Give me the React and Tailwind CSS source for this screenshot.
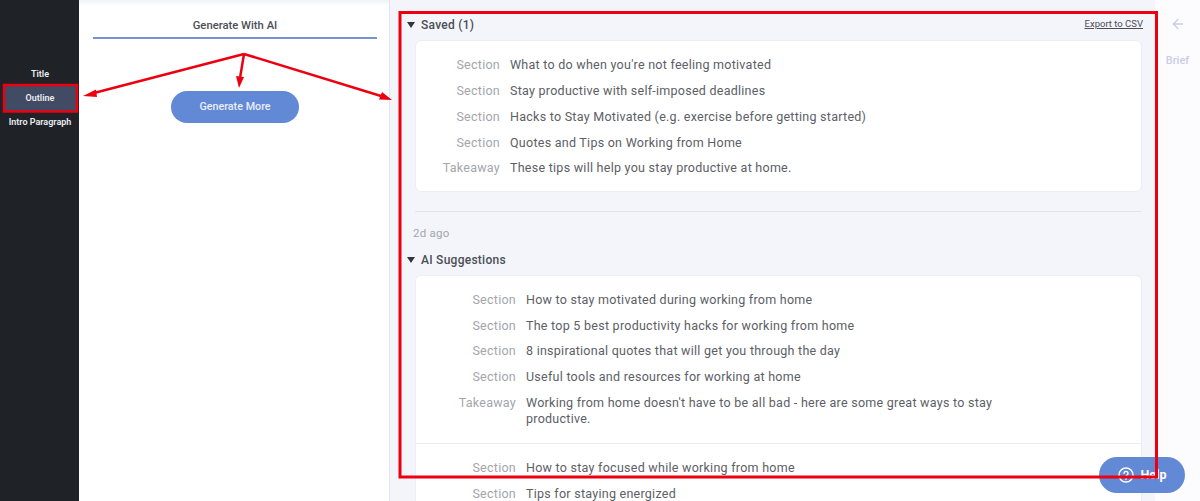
import { ArrowLeft } from "lucide-react";

const saved = [
  ["Section", "What to do when you're not feeling motivated", "h-[26px]"],
  ["Section", "Stay productive with self-imposed deadlines", "h-[26px]"],
  ["Section", "Hacks to Stay Motivated (e.g. exercise before getting started)", "h-[26px]"],
  ["Section", "Quotes and Tips on Working from Home", "h-[26px]"],
  ["Takeaway", "These tips will help you stay productive at home.", "h-[24px]"],
];

const suggestions = [
  ["Section", "How to stay motivated during working from home", "h-[26px]"],
  ["Section", "The top 5 best productivity hacks for working from home", "h-[26px]"],
  ["Section", "8 inspirational quotes that will get you through the day", "h-[25px]"],
  ["Section", "Useful tools and resources for working at home", "h-[26px]"],
];

const more = [
  ["Section", "How to stay focused while working from home"],
  ["Section", "Tips for staying energized"],
];

const Row = ({ label, text, labelWidth, rowClass }) => (
  <div className={`flex items-center gap-[10px] ${rowClass}`}>
    <span className={`shrink-0 text-right text-[#a3a6ab] ${labelWidth}`}>{label}</span>
    <span className="text-[#5c6066]">{text}</span>
  </div>
);

const Heading = ({ children }) => (
  <div className="flex items-center gap-[6px] text-[12px] font-medium text-[#4a4e55]">
    <span className="h-0 w-0 border-x-[4px] border-t-[6px] border-x-transparent border-t-[#33363b]" />
    <span>{children}</span>
  </div>
);

const Annotations = () => (
  <svg className="pointer-events-none absolute inset-0" width="1200" height="501" fill="none">
    <rect x="400" y="12.5" width="756.5" height="464.5" stroke="#ec0010" strokeWidth="3" />
    <rect x="4" y="85" width="73" height="26.5" stroke="#ec0010" strokeWidth="2.5" />
    <g stroke="#ec0010" strokeWidth="2.5">
      <path d="M244 54 L92 93.5" />
      <path d="M244 54 L240 78" />
      <path d="M244 54 L381 96" />
    </g>
    <g fill="#ec0010">
      <path d="M83 96 L96 89.5 L97 97 Z" />
      <path d="M239 88 L236 76 L244 77 Z" />
      <path d="M392 100 L379 99.5 L382 92 Z" />
    </g>
  </svg>
);

export default function App() {
  return (
    <div className="relative flex h-[501px] w-[1200px] overflow-hidden bg-white font-['Roboto',sans-serif]">
      {/* sidebar */}
      <aside className="flex w-[79px] shrink-0 flex-col items-stretch bg-[#1f2227] pl-[3px] pr-[2px] pt-[63px] text-center text-[9px] font-semibold text-[#eceef2]">
        <div className="flex h-[22px] items-center justify-center pt-[2px]">Title</div>
        <div className="flex h-[26px] items-center justify-center bg-[#414b63] pt-[2px]">Outline</div>
        <div className="flex h-[22px] items-center justify-center whitespace-nowrap pt-[2px]">Intro Paragraph</div>
      </aside>

      {/* generate panel */}
      <section className="flex w-[311px] shrink-0 flex-col items-center border-r border-[#e3e5ee] bg-[linear-gradient(to_bottom,#f1f2f5,#ffffff_6px)] pl-[14px] pr-[12px] pt-[19px]">
        <div className="w-[284px] border-b-2 border-[#7393d3] pb-[4px] text-center text-[11.25px] font-medium leading-[14px] text-[#4b4f56]">
          Generate With AI
        </div>
        <button className="mt-[52px] h-[32px] w-[128px] rounded-full bg-[#6289d6] text-[10.75px] font-medium text-[#e9eefa]">
          Generate More
        </button>
      </section>

      {/* results */}
      <main className="w-[765px] shrink-0 bg-[#f3f5fb] pl-[25px] pr-[13px] pt-[17px] text-[12.5px] tracking-[0.26px]">
        <div className="flex h-[16px] items-center justify-between">
          <div className="-ml-[8px]">
            <Heading>Saved (1)</Heading>
          </div>
          <a className="-mr-[1px] -mt-[1px] text-[9.5px] tracking-normal text-[#4a4e55] underline">Export to CSV</a>
        </div>
        <div className="mt-[7px] rounded-md border border-[#eceef5] bg-white pb-[11px] pl-[10px] pt-[11px]">
          {saved.map(([label, text, rowClass]) => (
            <Row key={text} label={label} text={text} labelWidth="w-[74px]" rowClass={rowClass} />
          ))}
        </div>
        <div className="mt-[19px] border-t border-[#e1e4ec]" />
        <div className="-ml-[2px] mt-[14px] text-[11.5px] leading-[14px] text-[#a3a6ab]">2d ago</div>
        <div className="-ml-[8px] mt-[11px]">
          <Heading>AI Suggestions</Heading>
        </div>
        <div className="mt-[6px] rounded-md border border-[#eceef5] bg-white pl-[10px] pt-[11px]">
          {suggestions.map(([label, text, rowClass]) => (
            <Row key={text} label={label} text={text} labelWidth="w-[90px]" rowClass={rowClass} />
          ))}
          <div className="flex items-start gap-[10px] pt-[5px] leading-[16px]">
            <span className="w-[90px] shrink-0 text-right text-[#a3a6ab]">Takeaway</span>
            <span className="w-[480px] text-[#5c6066]">
              Working from home doesn't have to be all bad - here are some great ways to stay productive.
            </span>
          </div>
          <div className="-ml-[10px] mt-[16px] border-t border-[#eceef5] pl-[10px] pt-[11px]">
            {more.map(([label, text]) => (
              <Row key={text} label={label} text={text} labelWidth="w-[90px]" rowClass="h-[26px]" />
            ))}
          </div>
        </div>
      </main>

      {/* right rail */}
      <aside className="flex w-[45px] shrink-0 flex-col items-center bg-[#fcfcfe] pt-[16px] text-[#c9cde5]">
        <ArrowLeft size={16} strokeWidth={2} />
        <span className="mt-[21px] text-[11px] font-medium">Brief</span>
      </aside>

      <button className="absolute left-[1099px] top-[457px] flex h-[36px] w-[86px] items-center justify-center gap-[7px] rounded-full bg-[#6289d6] text-[12.5px] font-bold text-white">
        <svg width="16" height="16" viewBox="0 0 16 16" fill="none" stroke="currentColor" strokeWidth="1.4">
          <circle cx="8" cy="8" r="7" />
          <path d="M6 6.3a2 2 0 1 1 3 1.8c-.7.4-1 .8-1 1.5" strokeLinecap="round" />
          <path d="M8 11.3v.9" strokeLinecap="round" />
        </svg>
        Help
      </button>

      <Annotations />
    </div>
  );
}
